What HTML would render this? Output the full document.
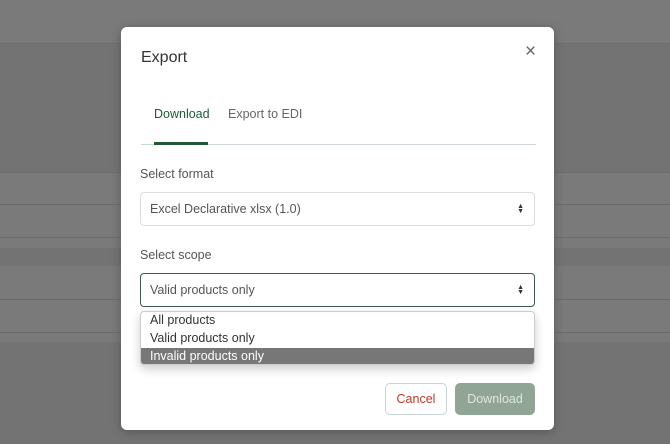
<!DOCTYPE html>
<html><head><style>
body{margin:0;width:670px;height:444px;overflow:hidden;background:#7a7a7a;font-family:"Liberation Sans",sans-serif;position:relative}
.bg{position:absolute;left:0;width:670px}
.m{position:absolute;left:121px;top:27px;width:433px;height:403px;background:#fff;border-radius:6px;box-shadow:0 2px 10px rgba(0,0,0,.25)}
.t{position:absolute;font-size:13px;color:#555}
.sel{position:absolute;left:19px;width:395px;height:34px;border:1px solid #ddd;border-radius:4px;box-sizing:border-box;font-size:12.5px;color:#555;padding:9px 9px}
.arr{position:absolute;right:10px;top:11px;font-size:7px;line-height:5px;color:#333}
</style></head><body>
<div class="bg" style="top:43px;height:129px;background:#737373;border-top:1px solid #6e6e6e"></div>
<div class="bg" style="top:172px;height:1px;background:#6c6c6c"></div>
<div class="bg" style="top:204px;height:1px;background:#6c6c6c"></div>
<div class="bg" style="top:237px;height:1px;background:#6c6c6c"></div>
<div class="bg" style="top:248px;height:18px;background:#737373"></div>
<div class="bg" style="top:299px;height:1px;background:#6c6c6c"></div>
<div class="bg" style="top:332px;height:1px;background:#6c6c6c"></div>
<div class="bg" style="top:342px;height:102px;background:#737373"></div>
<div class="m">
<div class="t" style="left:20px;top:22px;font-size:16px;color:#333">Export</div>
<div class="t" style="left:404px;top:14px;font-size:19px;color:#666">×</div>
<div class="t" style="left:33px;top:80px;font-size:12.5px;color:#1e5b34">Download</div>
<div class="t" style="left:107px;top:80px;font-size:12.5px;color:#666">Export to EDI</div>
<div style="position:absolute;left:20px;top:117px;width:395px;height:1px;background:#cfd8d4"></div>
<div style="position:absolute;left:33px;top:115px;width:54px;height:3px;background:#1e5b34"></div>
<div class="t" style="left:19px;top:140px;font-size:12.5px">Select format</div>
<div class="sel" style="top:165px">Excel Declarative xlsx (1.0)<div class="arr">▲<br>▼</div></div>
<div class="t" style="left:19px;top:221px;font-size:12.5px">Select scope</div>
<div class="sel" style="top:246px;border-color:#3d5a4c">Valid products only<div class="arr">▲<br>▼</div></div>
<div style="position:absolute;left:19px;top:284px;width:395px;height:54px;border:1px solid #ccc;border-radius:4px;box-sizing:border-box;overflow:hidden;box-shadow:0 4px 10px rgba(0,0,0,.2);font-size:12.5px;color:#333;background:#fff">
<div style="padding:1px 9px;height:16px">All products</div>
<div style="padding:1px 9px;height:16px">Valid products only</div>
<div style="padding:1px 9px;height:16px;background:#777;color:#fff">Invalid products only</div>
</div>
<div style="position:absolute;left:264px;top:356px;width:62px;height:32px;border:1px solid #c8d3d8;border-radius:5px;box-sizing:border-box;color:#c0392b;font-size:12.5px;text-align:center;line-height:30px">Cancel</div>
<div style="position:absolute;left:334px;top:356px;width:80px;height:32px;background:#91a597;border-radius:5px;color:#dfe8d8;font-size:12.5px;text-align:center;line-height:32px">Download</div>
</div>
</body></html>
